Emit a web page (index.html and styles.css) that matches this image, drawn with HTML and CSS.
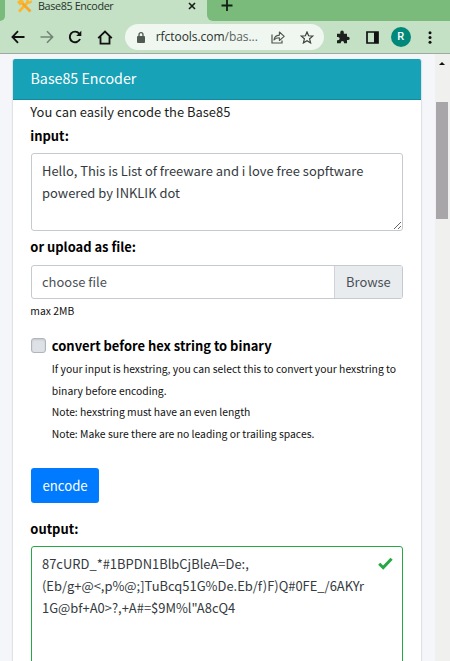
FILE: index.html
```html
<!DOCTYPE html>
<html lang="en">
<head>
    <meta charset="UTF-8">
    <meta name="viewport" content="width=device-width, initial-scale=1.0">
    <title>Base85 Encoder</title>
    <link rel="stylesheet" href="styles.css">
</head>
<body>
    <div class="tabstrip">
        <div class="tab-prev"></div>
        <div class="tab">
            <svg class="favicon" width="17" height="15" viewBox="0 0 17 15">
                <path d="M3 13.5L12 4" stroke="#fbb62c" stroke-width="2.6"/>
                <path d="M10 0L10.5 4L13 6L16 4.5L15.5 2L13.5 3.5L12.5 2.5L13.5 0Z" fill="#fbb62c"/>
                <path d="M6 5L14.5 13.5" stroke="#f9a825" stroke-width="2.8"/>
                <path d="M1 4L5 1L8 3.5L4 7.5Z" fill="#fbb62c"/>
            </svg>
            <span class="tab-title">Base85 Encoder</span>
            <svg class="tab-close" width="8" height="8" viewBox="0 0 8 8"><path d="M1 1L7 7M7 1L1 7" stroke="#161c17" stroke-width="1.6"/></svg>
        </div>
        <div class="tab-next">
            <svg width="12" height="12" viewBox="0 0 12 12"><path d="M6 0V11M.5 5.5H11.5" stroke="#132016" stroke-width="1.8"/></svg>
        </div>
    </div>

    <div class="toolbar">
        <svg class="nav-icon" width="14" height="14" viewBox="0 0 14 14"><path d="M13.5 7H2M7 1.2L1.4 7L7 12.8" fill="none" stroke="#111" stroke-width="1.8"/></svg>
        <svg class="nav-icon" width="14" height="14" viewBox="0 0 14 14"><path d="M.5 7H12M7 1.2L12.6 7L7 12.8" fill="none" stroke="#718474" stroke-width="1.6"/></svg>
        <svg class="nav-icon" width="14" height="14" viewBox="0 0 14 14"><path d="M12 9A5.3 5.3 0 1 1 11.2 3.6" fill="none" stroke="#111" stroke-width="1.9"/><path d="M13.3 .8V6H8.2Z" fill="#111"/></svg>
        <svg class="nav-icon" width="16" height="15" viewBox="0 0 16 15"><path d="M1.2 8.2L8 1.6L14.8 8.2M3.5 6.5V13.7H12.5V6.5" fill="none" stroke="#111" stroke-width="1.8"/></svg>
        <div class="address">
            <svg class="lock" width="8" height="11" viewBox="0 0 8 11"><rect y="4" width="8" height="7" rx="1" fill="#515953"/><path d="M2 4.5V2.7A2 2 0 0 1 6 2.7V4.5" fill="none" stroke="#515953" stroke-width="1.3"/></svg>
            <span class="url">rfctools.com<span class="path">/bas...</span></span>
            <svg class="share" width="14" height="13" viewBox="0 0 14 13"><path d="M1 3.5V12H11V9.5" fill="none" stroke="#4c554f" stroke-width="1.2"/><path d="M3 9C3.3 5.8 5.2 4.3 8.4 4.1V1L13.2 5.4L8.4 9.5V6.8C6 6.8 4.3 7.4 3 9Z" fill="none" stroke="#4c554f" stroke-width="1.1" stroke-linejoin="round"/></svg>
            <svg class="star" width="14" height="13" viewBox="0 0 14 13"><path d="M7 1L8.6 4.8L12.8 5.1L9.6 7.8L10.6 11.9L7 9.7L3.4 11.9L4.4 7.8L1.2 5.1L5.4 4.8Z" fill="none" stroke="#39413b" stroke-width="1.2"/></svg>
        </div>
        <svg class="puzzle" width="14" height="14" viewBox="0 0 14 14"><path d="M1 3.8H4.3V2.3A1.7 1.7 0 0 1 7.8 2.3V3.8H11V6.7H12A1.7 1.7 0 0 1 12 10.1H11V13.3H8V12.5A1.6 1.6 0 0 0 4.8 12.5V13.3H1V10.2H2A1.6 1.6 0 0 0 2 6.9H1Z" fill="#1c211d"/></svg>
        <svg class="panel" width="13" height="13" viewBox="0 0 13 13"><path d="M1 1H12V12H1Z" fill="none" stroke="#111" stroke-width="1.7"/><path d="M8 1H12V12H8Z" fill="#111"/></svg>
        <div class="avatar">R</div>
        <svg class="dots" width="4" height="13" viewBox="0 0 4 13"><circle cx="2" cy="1.8" r="1.5"/><circle cx="2" cy="6.5" r="1.5"/><circle cx="2" cy="11.2" r="1.5"/></svg>
    </div>

    <div class="viewport">
        <main class="card">
            <h1 class="card-header">Base85 Encoder</h1>
            <form class="card-body">
                <p class="intro">You can easily encode the Base85</p>
                <label class="label label-input" for="input">input:</label>
                <textarea class="control input" id="input">Hello, This is List of freeware and i love free sopftware
powered by INKLIK dot</textarea>
                <span class="label label-file">or upload as file:</span>
                <div class="file">
                    <span class="file-name">choose file</span>
                    <span class="file-browse">Browse</span>
                </div>
                <small class="max">max 2MB</small>
                <div class="check">
                    <span class="checkbox"></span>
                    <div>
                        <span class="label label-check">convert before hex string to binary</span>
                        <p class="help">If your input is hexstring, you can select this to convert your hexstring to<br>binary before encoding.<br>Note: hexstring must have an even length<br>Note: Make sure there are no leading or trailing spaces.</p>
                    </div>
                </div>
                <button class="btn" type="button">encode</button>
                <span class="label label-output">output:</span>
                <div class="control output">
                    <div class="result">87cURD_*#1BPDN1BlbCjBleA=De:,<br>(Eb/g+@&lt;,p%@;]TuBcq51G%De.Eb/f)F)Q#0FE_/6AKYr<br>1G@bf+A0&gt;?,+A#=$9M%l"A8cQ4</div>
                    <svg class="valid" width="15" height="13" viewBox="0 0 15 13"><path d="M1.2 6.7L5.2 10.6L13.6 1.7" fill="none" stroke="#28a745" stroke-width="3"/></svg>
                </div>
            </form>
        </main>
        <div class="scrollbar">
            <div class="scroll-up"></div>
            <div class="scroll-thumb"></div>
        </div>
    </div>
</body>
</html>
```
FILE: styles.css
```css
* {
    box-sizing: border-box;
}

body {
    margin: 0;
    height: 661px;
    overflow: hidden;
    display: flex;
    flex-direction: column;
    font-family: "Noto Sans CJK SC", "Noto Sans", sans-serif;
    font-size: 12.95px;
    color: #212529;
    background: #f4f6f9;
}

svg {
    display: block;
    flex: none;
}

/* browser window */
.tabstrip {
    flex: none;
    display: flex;
    height: 21px;
    background: #c4e0c5;
}

.tab-prev {
    width: 5px;
    background: #7aba7b;
    border-bottom-right-radius: 5px;
}

.tab {
    display: flex;
    width: 202px;
    padding-left: 11px;
}

.favicon {
    margin-top: -2px;
}

.tab-title {
    flex: none;
    margin-left: 5px;
    width: 150px;
    font: 10.8px/12px "Open Sans", sans-serif;
    letter-spacing: -0.38px;
    color: #263429;
}

.tab-close {
    margin: 2px 0 0;
}

.tab-next {
    flex: 1;
    padding-left: 14px;
    background: #7aba7b;
    border-bottom-left-radius: 6px;
}

.toolbar {
    flex: none;
    display: flex;
    align-items: center;
    height: 33px;
    padding-left: 11px;
    background: #c4e0c5;
    border-bottom: 1px solid #9cab9d;
}

.nav-icon {
    margin-right: 14.7px;
}

.address {
    display: flex;
    align-items: center;
    width: 199px;
    height: 26px;
    margin-left: -3px;
    padding-left: 12px;
    border-radius: 13px;
    background: #eff7f0;
}

.url {
    width: 115px;
    margin-left: 11px;
    font: 12px/20px "Open Sans", sans-serif;
    letter-spacing: -0.05px;
    white-space: nowrap;
    color: #27302a;
}

.path {
    color: #5b645d;
}

.star {
    margin-left: 15px;
}

.puzzle {
    margin-left: 12px;
}

.panel {
    margin-left: 16px;
}

.avatar {
    width: 20px;
    height: 20px;
    margin-left: 12px;
    border-radius: 50%;
    background: #00897b;
    color: #fff;
    font: 500 11px/20px Roboto, sans-serif;
    text-align: center;
}

.dots {
    margin-left: 17px;
    fill: #111;
}

/* page */
.viewport {
    flex: 1;
    min-height: 0;
    display: flex;
    justify-content: space-between;
    padding-left: 12px;
}

.card {
    width: 410px;
    margin-top: 5px;
    border: solid #dee2e6;
    border-width: 0 1px;
    border-radius: 3px 3px 0 0;
    background: #fff;
    box-shadow: 0 0 1px rgba(0, 0, 0, 0.15);
    overflow: hidden;
}

.card-header {
    height: 41px;
    margin: 0 -1px;
    padding-left: 18.5px;
    background: #17a2b8;
    border-bottom: 1px solid #138a9d;
    color: #fff;
    font-size: 14.25px;
    font-weight: 400;
    line-height: 38px;
}

.card-body {
    display: flex;
    flex-direction: column;
    align-items: flex-start;
    padding: 0 17px 0 18px;
}

.intro {
    margin: 0 0 0 -0.7px;
    line-height: 24px;
    color: #1b1e21;
}

.label {
    margin-left: -0.7px;
    font-weight: 700;
    line-height: 24px;
    color: #000;
    white-space: nowrap;
}

.label-input {
    margin-bottom: 5px;
}

.control {
    width: 372px;
    border: 1px solid #ced4da;
    border-radius: 3px;
    background: #fff;
    color: #343a40;
    line-height: 21.6px;
}

.input {
    height: 78px;
    padding: 6px 10px 0;
    font-family: inherit;
    font-size: inherit;
    border-color: #c5cad0;
    resize: vertical;
    overflow: hidden;
    white-space: pre;
}

.label-file {
    margin-top: 4px;
    margin-bottom: 6px;
}

.file {
    display: flex;
    width: 372px;
    height: 34px;
    border: 1px solid #c5cad0;
    border-radius: 3px;
    line-height: 32px;
    color: #495057;
    overflow: hidden;
}

.file-name {
    flex: 1;
    padding-left: 10px;
}

.file-browse {
    width: 68px;
    padding-left: 11px;
    border-left: 1px solid #ced4da;
    background: #e9ecef;
}

.max {
    margin-left: -0.7px;
    font-size: 10.37px;
    line-height: 24px;
    color: #111;
}

.check {
    display: flex;
    margin-top: 11px;
}

.checkbox {
    width: 15px;
    height: 15px;
    margin: 4px 6.5px 0 0;
    border: 1px solid #adb5bd;
    border-radius: 3px;
    background: #dee2e6;
    box-shadow: inset 0 1px 2px rgba(0, 0, 0, 0.12);
}

.label-check {
    display: block;
}

.help {
    margin: 0 0 0 -0.7px;
    font-size: 10.37px;
    line-height: 21.6px;
    color: #111;
    white-space: nowrap;
}

.btn {
    width: 68px;
    height: 35px;
    margin-top: 24px;
    padding: 0;
    border: 0;
    border-radius: 3px;
    background: #007bff;
    color: #fff;
    font-family: inherit;
    font-size: 13.2px;
    line-height: 34px;
}

.label-output {
    margin-top: 14px;
    margin-bottom: 5px;
}

.output {
    display: flex;
    justify-content: space-between;
    height: 140px;
    padding: 6px 9px 0 10px;
    border-color: #28a745;
    white-space: nowrap;
}

.valid {
    margin-top: 4px;
}

.scrollbar {
    width: 15px;
    padding: 8px 1px 0;
    background: #f0f0ee;
}

.scroll-up {
    width: 0;
    margin-left: 3px;
    border: solid transparent;
    border-width: 0 3.5px 3px;
    border-bottom-color: #111;
}

.scroll-thumb {
    width: 12px;
    height: 117px;
    margin-top: 37px;
    background: #a8a6a8;
}
```
